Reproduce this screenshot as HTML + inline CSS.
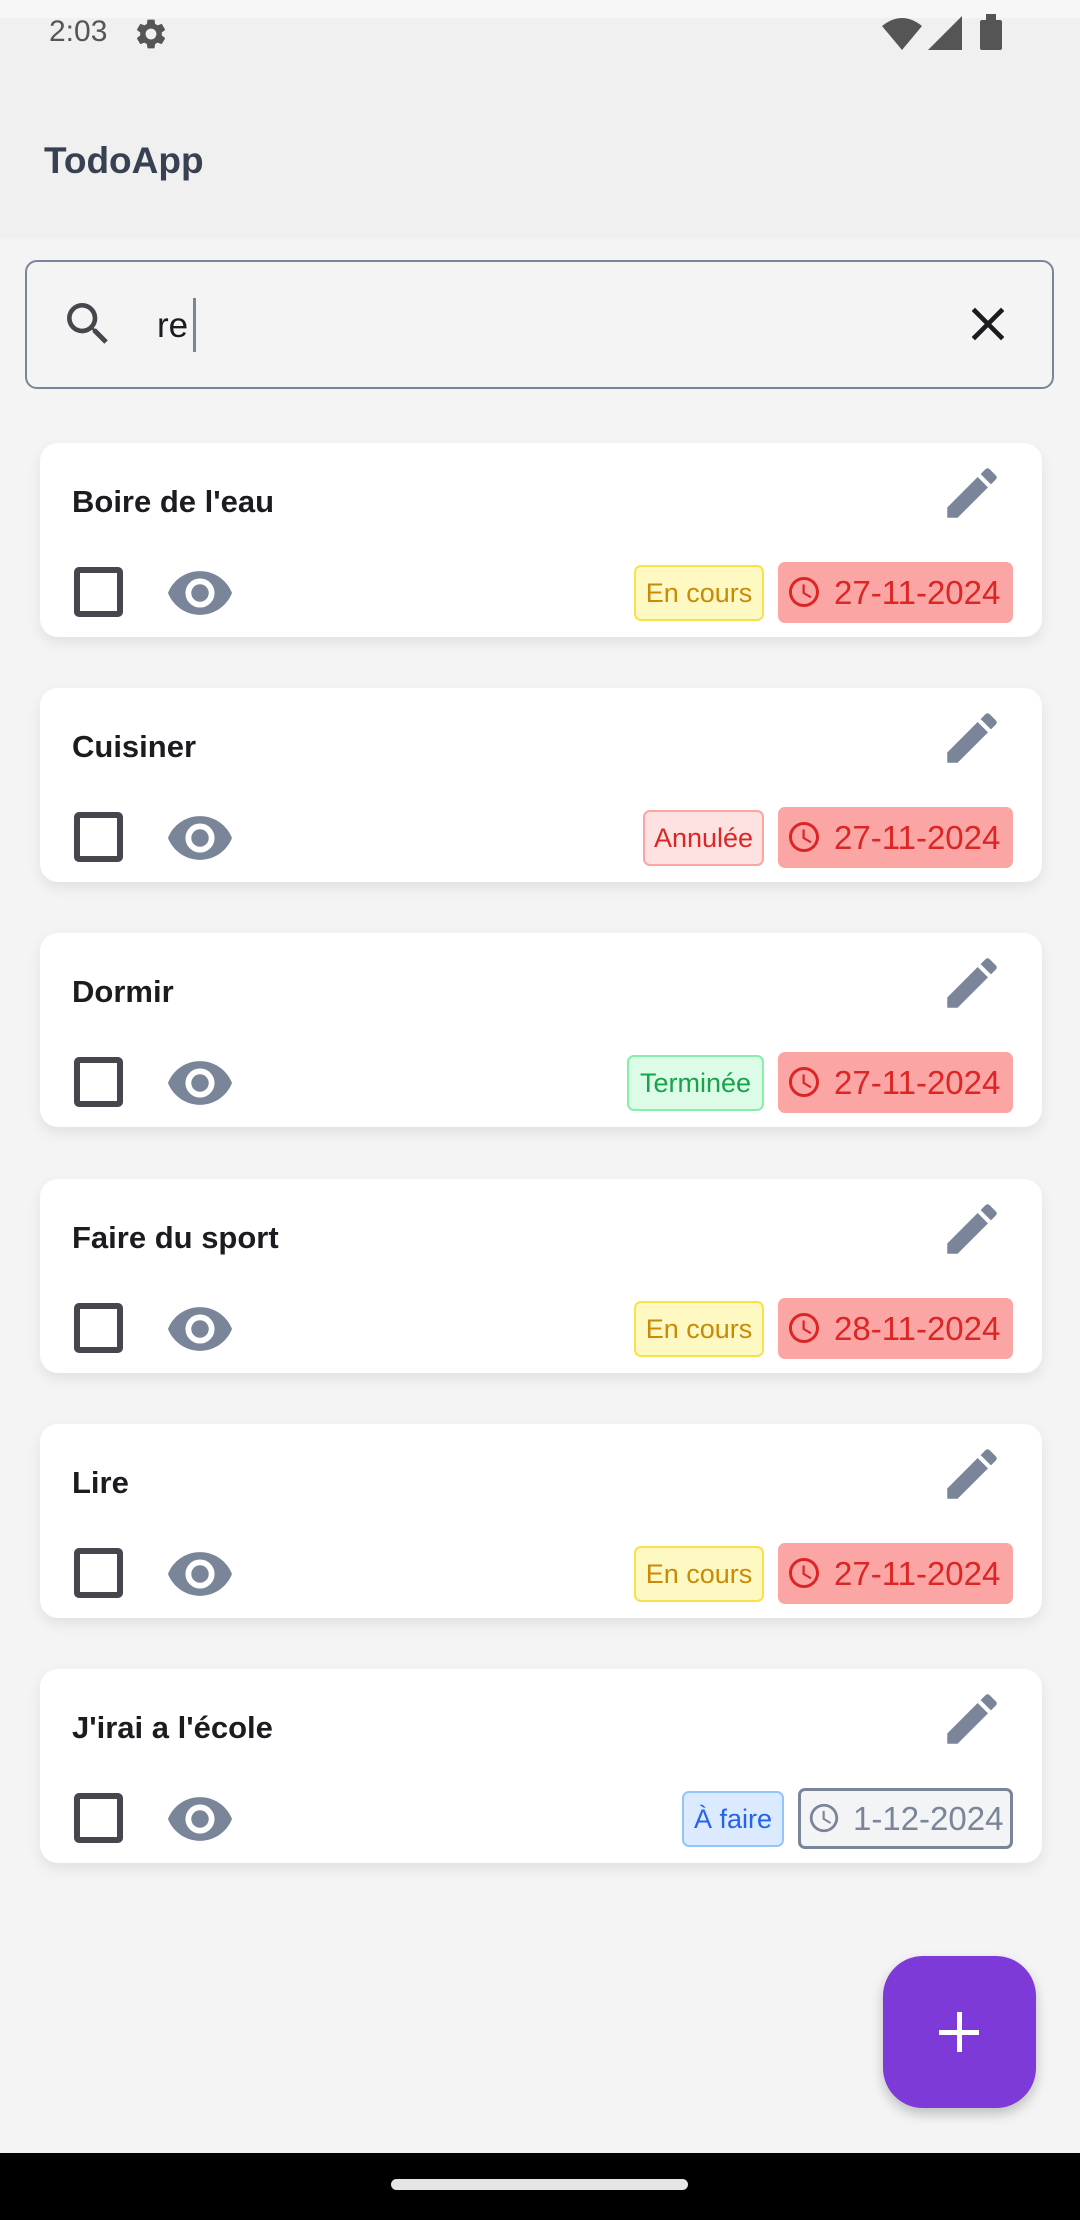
<!DOCTYPE html>
<html><head><meta charset="utf-8"><style>
*{box-sizing:border-box;margin:0;padding:0}
body{width:1080px;height:2220px;background:#f4f4f4;font-family:"Liberation Sans",Roboto,sans-serif;position:relative;overflow:hidden}
.abs{position:absolute}
.card{position:absolute;left:40px;width:1002px;height:194px;background:#fff;border-radius:18px;box-shadow:0 6px 14px rgba(0,0,0,0.08)}
.title{position:absolute;left:32px;top:41px;font-size:31px;font-weight:bold;color:#1c1b1f}
.cb{position:absolute;left:34px;top:124px;width:49px;height:50px;border:6px solid #49454f;border-radius:5px}
.eye{position:absolute;left:128px;top:128px}
.pen{position:absolute;left:899px;top:17px}
.chip{position:absolute;top:122px;height:56px;border:2px solid;border-radius:7px;font-size:27px;line-height:52px;text-align:center}
.date{position:absolute;left:738px;top:119px;width:235px;height:61px;background:#fca5a5;border-radius:7px;color:#dc2626;font-size:33px;line-height:61px;padding-left:56px}
.date svg{position:absolute;left:8px;top:12px}
</style></head><body>
<div class="abs" style="left:0;top:0;width:1080px;height:18px;background:#f7f7f7"></div>
<div class="abs" style="left:0;top:18px;width:1080px;height:220px;background:#f0f0f0"></div>
<div class="abs" style="left:49px;top:15px;font-size:30px;color:#555">2:03</div>
<svg class="abs" style="left:133px;top:16px" width="36" height="36" viewBox="0 0 24 24"><path fill="#555" d="M19.14 12.94c.04-.3.06-.61.06-.94s-.02-.64-.07-.94l2.03-1.58a.49.49 0 0 0 .12-.61l-1.920-3.32a.49.49 0 0 0-.59-.22l-2.39.96c-.5-.38-1.030-.7-1.620-.94l-.36-2.54a.48.48 0 0 0-.48-.41h-3.84c-.24 0-.43.17-.47.41l-.36 2.54c-.59.24-1.13.57-1.62.94l-2.39-.96a.49.49 0 0 0-.59.22L2.74 8.87c-.12.21-.08.47.12.61l2.03 1.58c-.05.3-.09.63-.09.94s.02.64.07.94l-2.03 1.58a.49.49 0 0 0-.12.61l1.92 3.32c.12.22.37.29.59.22l2.39-.96c.5.38 1.03.7 1.62.94l.36 2.54c.05.24.24.41.48.41h3.84c.24 0 .44-.17.47-.41l.36-2.54c.59-.24 1.13-.56 1.62-.94l2.39.96c.22.08.47 0 .59-.22l1.92-3.32c.12-.22.07-.47-.12-.61l-2.01-1.58zM12 15.6A3.6 3.6 0 1 1 12 8.4a3.6 3.6 0 0 1 0 7.2z"/></svg>
<svg class="abs" style="left:882px;top:16px" width="40" height="34" viewBox="0 0 40 34"><path fill="#555" d="M0 10 Q20 -6 40 10 L20 34Z"/></svg>
<svg class="abs" style="left:928px;top:16px" width="34" height="34"><path fill="#555" d="M34 0 V34 H0Z"/></svg>
<div class="abs" style="left:980px;top:20px;width:22px;height:30px;background:#555;border-radius:2px"></div>
<div class="abs" style="left:986px;top:14px;width:10px;height:8px;background:#555"></div>
<div class="abs" style="left:44px;top:140px;font-size:37px;font-weight:bold;color:#374151">TodoApp</div>

<div class="abs" style="left:25px;top:260px;width:1029px;height:129px;border:2px solid #7a8599;border-radius:12px"></div>
<svg class="abs" style="left:60px;top:296px" width="56" height="56" viewBox="0 0 24 24"><path fill="#49454f" d="M15.5 14h-.79l-.28-.27A6.470 6.470 0 0 0 16 9.5 6.5 6.5 0 1 0 9.5 16c1.61 0 3.09-.59 4.23-1.57l.27.28v.79l5 4.99L20.49 19l-4.99-5zm-6 0C7.01 14 5 11.99 5 9.5S7.01 5 9.5 5 14 7.01 14 9.5 11.99 14 9.5 14z"/></svg>
<div class="abs" style="left:157px;top:306px;font-size:35px;color:#1c1b1f">re</div>
<div class="abs" style="left:193px;top:298px;width:3px;height:54px;background:#7a8599"></div>
<svg class="abs" style="left:960px;top:296px" width="56" height="56" viewBox="0 0 24 24"><path fill="#1c1b1f" d="M19 6.41 17.59 5 12 10.59 6.41 5 5 6.41 10.59 12 5 17.59 6.41 19 12 13.41 17.59 19 19 17.59 13.41 12z"/></svg>

<svg width="0" height="0" style="position:absolute"><defs>
<symbol id="eye" viewBox="1 4.5 22 15"><path fill="#7a8599" d="M12 4.5C7 4.5 2.73 7.61 1 12c1.73 4.39 6 7.5 11 7.5s9.27-3.11 11-7.5c-1.73-4.39-6-7.5-11-7.5zM12 17a5 5 0 1 1 0-10 5 5 0 0 1 0 10zm0-8a3 3 0 1 0 0 6 3 3 0 0 0 0-6z"/></symbol>
<symbol id="pen" viewBox="0 0 24 24"><path fill="#7a8599" d="M3 17.25V21h3.75L17.81 9.94l-3.75-3.75L3 17.25zM20.71 7.04a1 1 0 0 0 0-1.41l-2.34-2.34a1 1 0 0 0-1.41 0l-1.83 1.83 3.75 3.75 1.83-1.83z"/></symbol>
<symbol id="clk" viewBox="0 0 24 24"><path d="M11.99 2C6.47 2 2 6.48 2 12s4.47 10 9.99 10C17.52 22 22 17.52 22 12S17.52 2 11.99 2zM12 20c-4.42 0-8-3.58-8-8s3.58-8 8-8 8 3.58 8 8-3.58 8-8 8zm.5-13H11v6l5.25 3.15.75-1.23-4.5-2.67z"/></symbol>
</defs></svg>

<div class="card" style="top:443px"><div class="title">Boire de l'eau</div><div class="cb"></div><svg class="eye" width="64" height="44"><use href="#eye"/></svg><svg class="pen" width="66" height="66"><use href="#pen"/></svg>
<div class="chip" style="left:594px;width:130px;background:#fef9c3;border-color:#fde047;color:#ca8a04">En cours</div>
<div class="date"><svg width="36" height="36" fill="#dc2626"><use href="#clk"/></svg>27-11-2024</div></div>

<div class="card" style="top:688px"><div class="title">Cuisiner</div><div class="cb"></div><svg class="eye" width="64" height="44"><use href="#eye"/></svg><svg class="pen" width="66" height="66"><use href="#pen"/></svg>
<div class="chip" style="left:603px;width:121px;background:#fee2e2;border-color:#fca5a5;color:#dc2626">Annulée</div>
<div class="date"><svg width="36" height="36" fill="#dc2626"><use href="#clk"/></svg>27-11-2024</div></div>

<div class="card" style="top:933px"><div class="title">Dormir</div><div class="cb"></div><svg class="eye" width="64" height="44"><use href="#eye"/></svg><svg class="pen" width="66" height="66"><use href="#pen"/></svg>
<div class="chip" style="left:587px;width:137px;background:#dcfce7;border-color:#86efac;color:#16a34a">Terminée</div>
<div class="date"><svg width="36" height="36" fill="#dc2626"><use href="#clk"/></svg>27-11-2024</div></div>

<div class="card" style="top:1179px"><div class="title">Faire du sport</div><div class="cb"></div><svg class="eye" width="64" height="44"><use href="#eye"/></svg><svg class="pen" width="66" height="66"><use href="#pen"/></svg>
<div class="chip" style="left:594px;width:130px;background:#fef9c3;border-color:#fde047;color:#ca8a04">En cours</div>
<div class="date"><svg width="36" height="36" fill="#dc2626"><use href="#clk"/></svg>28-11-2024</div></div>

<div class="card" style="top:1424px"><div class="title">Lire</div><div class="cb"></div><svg class="eye" width="64" height="44"><use href="#eye"/></svg><svg class="pen" width="66" height="66"><use href="#pen"/></svg>
<div class="chip" style="left:594px;width:130px;background:#fef9c3;border-color:#fde047;color:#ca8a04">En cours</div>
<div class="date"><svg width="36" height="36" fill="#dc2626"><use href="#clk"/></svg>27-11-2024</div></div>

<div class="card" style="top:1669px"><div class="title">J'irai a l'école</div><div class="cb"></div><svg class="eye" width="64" height="44"><use href="#eye"/></svg><svg class="pen" width="66" height="66"><use href="#pen"/></svg>
<div class="chip" style="left:642px;width:102px;background:#dbeafe;border-color:#93c5fd;color:#2563eb">À faire</div>
<div class="date" style="left:758px;width:215px;background:#f3f4f6;border:3px solid #7a8599;color:#7a8599;line-height:55px;padding-left:52px"><svg width="34" height="34" fill="#7a8599" style="top:10px;left:6px"><use href="#clk"/></svg>1-12-2024</div></div>

<div class="abs" style="left:883px;top:1956px;width:153px;height:152px;background:#7e3ad8;border-radius:40px;box-shadow:0 6px 12px rgba(0,0,0,0.22)"></div>
<div class="abs" style="left:939px;top:2030px;width:40px;height:5px;background:#fff"></div>
<div class="abs" style="left:957px;top:2012px;width:5px;height:40px;background:#fff"></div>

<div class="abs" style="left:0;top:2153px;width:1080px;height:67px;background:#000"></div>
<div class="abs" style="left:391px;top:2179px;width:297px;height:11px;background:#e5e5e5;border-radius:6px"></div>
</body></html>
